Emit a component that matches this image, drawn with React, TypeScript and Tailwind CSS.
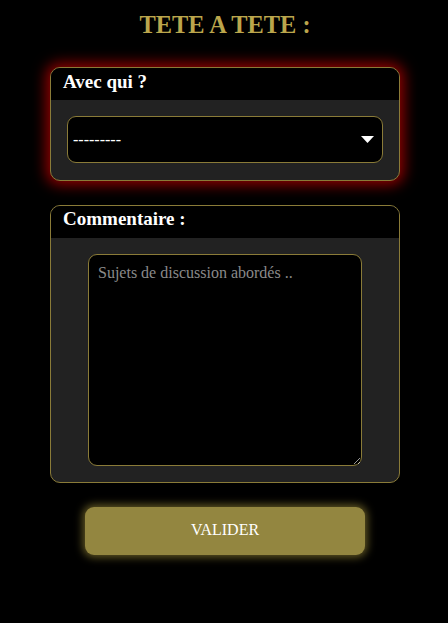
import React from 'react';

const serif = { fontFamily: '"Liberation Serif", "Times New Roman", serif' };

export default function App() {
  return (
    <div className="min-h-[623px] bg-black text-white" style={serif}>
      <div className="flex flex-col items-center pt-[11px] pb-10 pl-[2px]">
        <h1 className="text-[24.4px] font-bold leading-[28px] text-[#bba64c]">TETE A TETE :</h1>

        {/* Avec qui */}
        <div className="mt-[28px] w-[350px] overflow-hidden rounded-[10px] border border-[#8a7b38] bg-[#222222] shadow-[0_0_14px_4px_rgba(180,0,0,0.8)]">
          <div className="h-[32px] bg-black px-3 pt-[1px] text-[19px] font-bold leading-[26px]">Avec qui ?</div>
          <div className="px-4 pt-4 pb-[17px]">
            <div className="flex h-[47px] items-center justify-between rounded-[9px] border border-[#8a7b38] bg-black pl-[5px] pr-[8px]">
              <span className="text-[16px]">---------</span>
              <svg width="13" height="8" viewBox="0 0 13 8">
                <path d="M0 0 L13 0 L6.5 7 Z" fill="white" />
              </svg>
            </div>
          </div>
        </div>

        {/* Commentaire */}
        <div className="mt-[24px] w-[350px] overflow-hidden rounded-[10px] border border-[#8a7b38] bg-[#222222]">
          <div className="h-[32px] bg-black px-3 pt-0 text-[19px] font-bold leading-[26px]">Commentaire :</div>
          <div className="flex justify-center pt-4 pb-[16px]">
            <textarea
              placeholder="Sujets de discussion abordés .."
              className="h-[212px] w-[274px] rounded-[9px] border border-[#8a7b38] bg-black px-[9px] py-[6px] text-[16px] text-white outline-none placeholder:text-[#8a8a8a]"
              style={serif}
            />
          </div>
        </div>

        <button
          className="mt-[24px] h-[48px] w-[280px] rounded-[9px] bg-[#938640] pb-[2px] text-[16px] text-white shadow-[0_0_8px_2px_rgba(190,170,70,0.55)]"
          style={serif}
        >
          VALIDER
        </button>
      </div>
    </div>
  );
}
